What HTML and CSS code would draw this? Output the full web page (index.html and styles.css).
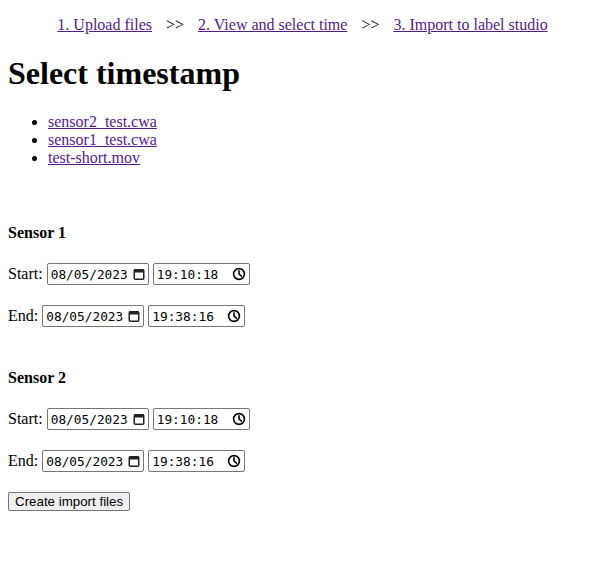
FILE: index.html
```html
<!DOCTYPE html>
<html>
<head>
<meta charset="utf-8">
<link rel="stylesheet" href="styles.css">
</head>
<body>
<p class="steps">
  <a href="#">1. Upload files</a><span class="sep">&gt;&gt;</span><a href="#">2. View and select time</a><span class="sep">&gt;&gt;</span><a href="#">3. Import to label studio</a>
</p>
<h1>Select timestamp</h1>
<ul class="files">
  <li><a href="#">sensor2_test.cwa</a></li>
  <li><a href="#">sensor1_test.cwa</a></li>
  <li><a href="#">test-short.mov</a></li>
</ul>
<form class="form">
  <div class="sensor">
    <h4>Sensor 1</h4>
    <p class="row"><span class="lbl">Start:</span>
      <span class="field date"><input type="text" value="08/05/2023"><svg class="ico" viewBox="0 0 12 12"><rect x="1.25" y="1.75" width="9.5" height="9.5" rx="1"/><rect class="fill" x="1" y="1.5" width="10" height="3"/></svg></span>
      <span class="field time"><input type="text" value="19:10:18"><svg class="ico clock" viewBox="0 0 14 14"><circle cx="7" cy="7" r="5.4"/><path d="M7 3.8V7l2.4 2.2"/></svg></span></p>
    <p class="row"><span class="lbl">End:</span>
      <span class="field date"><input type="text" value="08/05/2023"><svg class="ico" viewBox="0 0 12 12"><rect x="1.25" y="1.75" width="9.5" height="9.5" rx="1"/><rect class="fill" x="1" y="1.5" width="10" height="3"/></svg></span>
      <span class="field time"><input type="text" value="19:38:16"><svg class="ico clock" viewBox="0 0 14 14"><circle cx="7" cy="7" r="5.4"/><path d="M7 3.8V7l2.4 2.2"/></svg></span></p>
  </div>
  <div class="sensor">
    <h4>Sensor 2</h4>
    <p class="row"><span class="lbl">Start:</span>
      <span class="field date"><input type="text" value="08/05/2023"><svg class="ico" viewBox="0 0 12 12"><rect x="1.25" y="1.75" width="9.5" height="9.5" rx="1"/><rect class="fill" x="1" y="1.5" width="10" height="3"/></svg></span>
      <span class="field time"><input type="text" value="19:10:18"><svg class="ico clock" viewBox="0 0 14 14"><circle cx="7" cy="7" r="5.4"/><path d="M7 3.8V7l2.4 2.2"/></svg></span></p>
    <p class="row"><span class="lbl">End:</span>
      <span class="field date"><input type="text" value="08/05/2023"><svg class="ico" viewBox="0 0 12 12"><rect x="1.25" y="1.75" width="9.5" height="9.5" rx="1"/><rect class="fill" x="1" y="1.5" width="10" height="3"/></svg></span>
      <span class="field time"><input type="text" value="19:38:16"><svg class="ico clock" viewBox="0 0 14 14"><circle cx="7" cy="7" r="5.4"/><path d="M7 3.8V7l2.4 2.2"/></svg></span></p>
  </div>
  <button type="button" class="btn">Create import files</button>
</form>
</body>
</html>
```
FILE: styles.css
```css
html { background: #fff; }
body {
  margin: 8px;
  font-family: "Liberation Serif", "Times New Roman", serif;
  font-size: 16px;
  color: #000;
}
a { color: #551a8b; }
.steps {
  text-align: center;
  margin: 8px 0 16px;
  padding-right: 8px;
}
.sep { margin: 0 14px; }
h1 {
  font-size: 32px;
  margin: 21px 0;
}
.files {
  margin: 16px 0;
  padding-left: 40px;
}
.form { padding-top: 20px; }
h4 {
  font-size: 16px;
  margin: 21px 0 19px;
}
.sensor + .sensor h4 { margin-top: 40px; }
.row {
  display: flex;
  align-items: center;
  gap: 4px;
  height: 26px;
  margin: 16px 0;
}
.field {
  position: relative;
  display: block;
}
.field input {
  display: block;
  font-family: "DejaVu Sans Mono", "Liberation Mono", monospace;
  font-size: 12.8px;
  color: #000;
  border: 1px solid #767676;
  border-radius: 2px;
  box-sizing: border-box;
  height: 22px;
  padding: 1px 20px 1px 3px;
  background: #fff;
  outline: none;
}
.date input { width: 102px; }
.time input { width: 97px; }
.ico {
  position: absolute;
  top: 5px;
  width: 12px;
  height: 12px;
  fill: none;
  stroke: #222;
  stroke-width: 1.5;
  pointer-events: none;
}
.ico .fill { fill: #222; stroke: none; }
.date .ico { right: 4px; }
.clock {
  right: 4px;
  top: 4px;
  width: 14px;
  height: 14px;
  stroke: #000;
  stroke-width: 1.6;
  stroke-linecap: round;
  stroke-linejoin: round;
}
.btn {
  display: block;
  margin-top: 18px;
  font-family: "Liberation Sans", Arial, sans-serif;
  font-size: 13.33px;
  color: #000;
  background: #efefef;
  border: 1px solid #767676;
  border-radius: 2px;
  padding: 1px 6px;
}
```
